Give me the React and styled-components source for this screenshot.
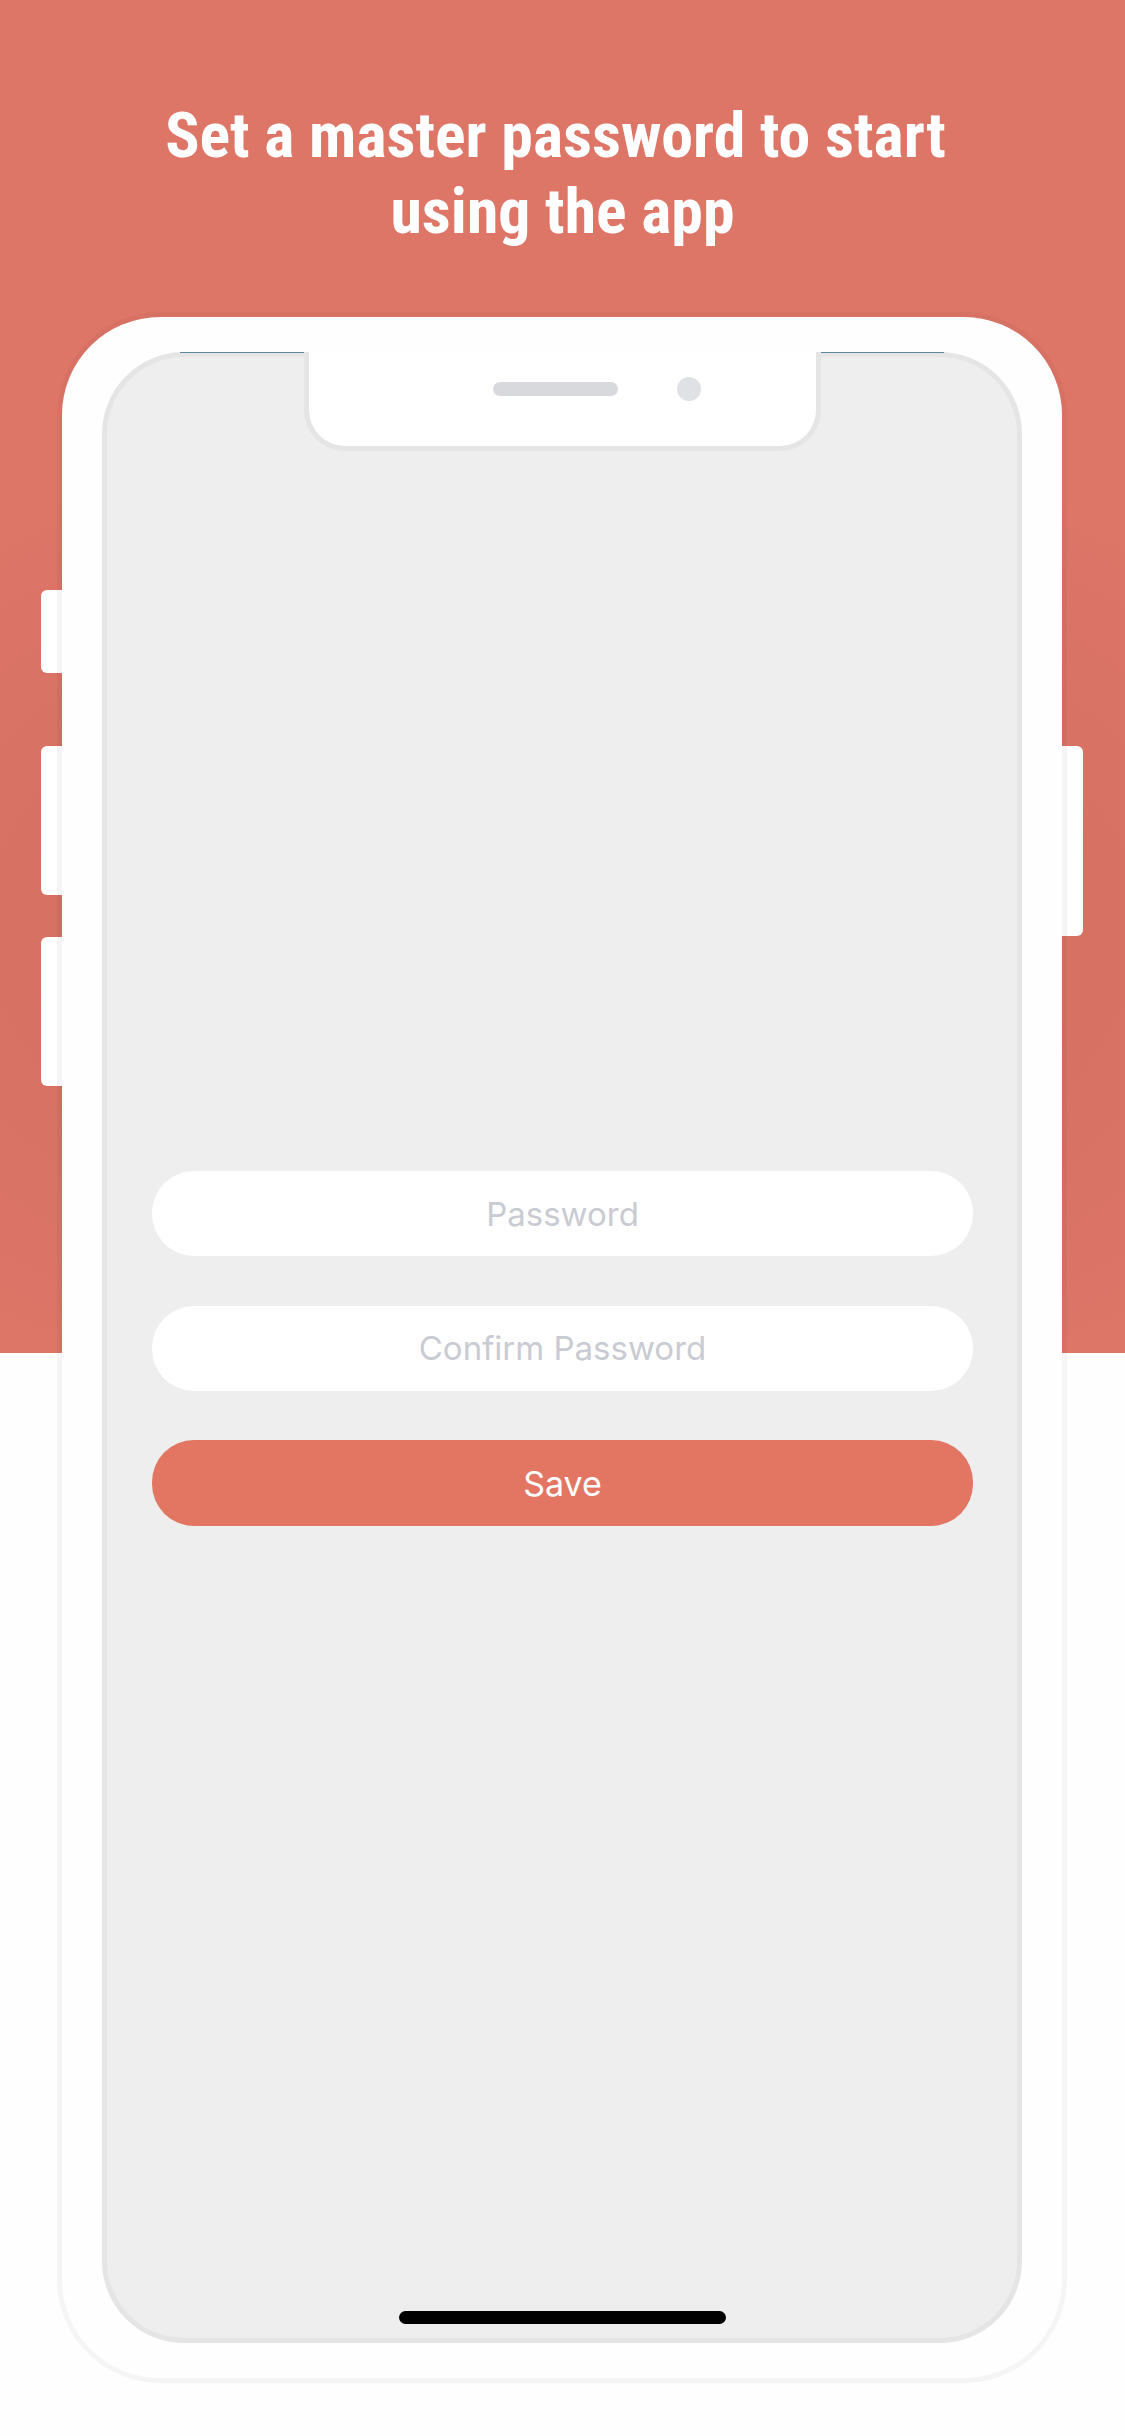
import React from "react";
import styled, { createGlobalStyle } from "styled-components";

const Global = createGlobalStyle`
  html, body { margin: 0; padding: 0; background: #fff; }
  * { box-sizing: border-box; }
`;

const Page = styled.div`
  width: 1125px;
  height: 2436px;
  overflow: hidden;
  display: flex;
  flex-direction: column;
  align-items: center;
  background:
    linear-gradient(to bottom, transparent 1353px, #fefefe 1353px),
    radial-gradient(ellipse 900px 520px at 50% 930px, #d37062 0%, #d67163 60%, #de7668 100%);
`;

const Title = styled.h1`
  margin: 0;
  padding-top: 98px;
  width: 900px;
  height: 317px;
  font-family: "Roboto Condensed", "Roboto", sans-serif;
  font-stretch: condensed;
  font-weight: 700;
  font-size: 63.8px;
  line-height: 76.4px;
  color: #fff;
  text-align: center;
`;

const TitleLine = styled.span`
  display: block;
  padding-right: ${(p) => p.$shift || 0}px;
`;

const Phone = styled.div`
  position: relative;
  width: 1000px;
  height: 2061px;
  margin-right: 1px;
  padding: 35px 40px;
  background: #fefefe;
  border-radius: 98px;
  box-shadow: 0 0 0 5px rgba(0, 0, 0, 0.035);
`;

const KeyColumn = styled.div`
  position: absolute;
  top: ${(p) => p.$top}px;
  ${(p) => (p.$right ? "right: -21px;" : "left: -21px;")}
  width: 21px;
  display: flex;
  flex-direction: column;
`;

const SideKey = styled.div`
  height: ${(p) => p.$height}px;
  margin-top: ${(p) => p.$gap || 0}px;
  border-radius: ${(p) => (p.$right ? "0 6px 6px 0" : "6px 0 0 6px")};
  background: linear-gradient(to ${(p) => (p.$right ? "right" : "left")}, #f5f5f5 5px, #fff 5px);
`;

const Screen = styled.div`
  position: relative;
  width: 920px;
  height: 1991px;
  background: #eeeeee;
  border: 5px solid #e5e5e5;
  border-radius: 82px;
  display: flex;
  flex-direction: column;
  align-items: center;
  padding: 814px 0 14px;
`;

const TopLine = styled.div`
  position: absolute;
  top: -5px;
  left: 73px;
  right: 73px;
  height: 1px;
  background: #5b8a9c;
`;

const Notch = styled.div`
  position: absolute;
  top: -5px;
  left: 197px;
  width: 517px;
  height: 99px;
  display: flex;
  align-items: center;
  gap: 59px;
  padding: 0 0 20px 184px;
  background: #fff;
  border: 5px solid #e5e5e5;
  border-top: none;
  border-radius: 0 0 41px 41px;
`;

const Speaker = styled.div`
  width: 125px;
  height: 14px;
  border-radius: 7px;
  background: #d8d9dd;
`;

const Camera = styled.div`
  width: 24px;
  height: 24px;
  border-radius: 50%;
  background: #e0e1e4;
`;

const Form = styled.div`
  display: flex;
  flex-direction: column;
  gap: 49.3px;
  margin-left: 1px;
`;

const Field = styled.input`
  display: block;
  width: 821px;
  height: 85.3px;
  border: none;
  outline: none;
  border-radius: 42px;
  background: #fff;
  text-align: center;
  font-family: "Inter", sans-serif;
  font-size: 33px;
  color: #333;
  &::placeholder { color: #c9cbd3; opacity: 1; }
`;

const SaveButton = styled.button`
  display: block;
  width: 821px;
  height: 86px;
  border: none;
  border-radius: 42px;
  background: #e27663;
  color: #fff;
  font-family: "Inter", sans-serif;
  font-size: 34px;
`;

const HomeBar = styled.div`
  margin-top: auto;
  margin-left: 1px;
  width: 327px;
  height: 13px;
  border-radius: 7px;
  background: #000;
`;

export default function App() {
  return (
    <Page>
      <Global />
      <Title>
        <TitleLine $shift={14}>Set a master password to start</TitleLine>
        <TitleLine>using the app</TitleLine>
      </Title>
      <Phone>
        <KeyColumn $top={273}>
          <SideKey $height={83} />
          <SideKey $height={149} $gap={73} />
          <SideKey $height={149} $gap={42} />
        </KeyColumn>
        <KeyColumn $right $top={429}>
          <SideKey $right $height={190} />
        </KeyColumn>
        <Screen>
          <TopLine />
          <Notch>
            <Speaker />
            <Camera />
          </Notch>
          <Form>
            <Field placeholder="Password" readOnly />
            <Field placeholder="Confirm Password" readOnly />
            <SaveButton>Save</SaveButton>
          </Form>
          <HomeBar />
        </Screen>
      </Phone>
    </Page>
  );
}
